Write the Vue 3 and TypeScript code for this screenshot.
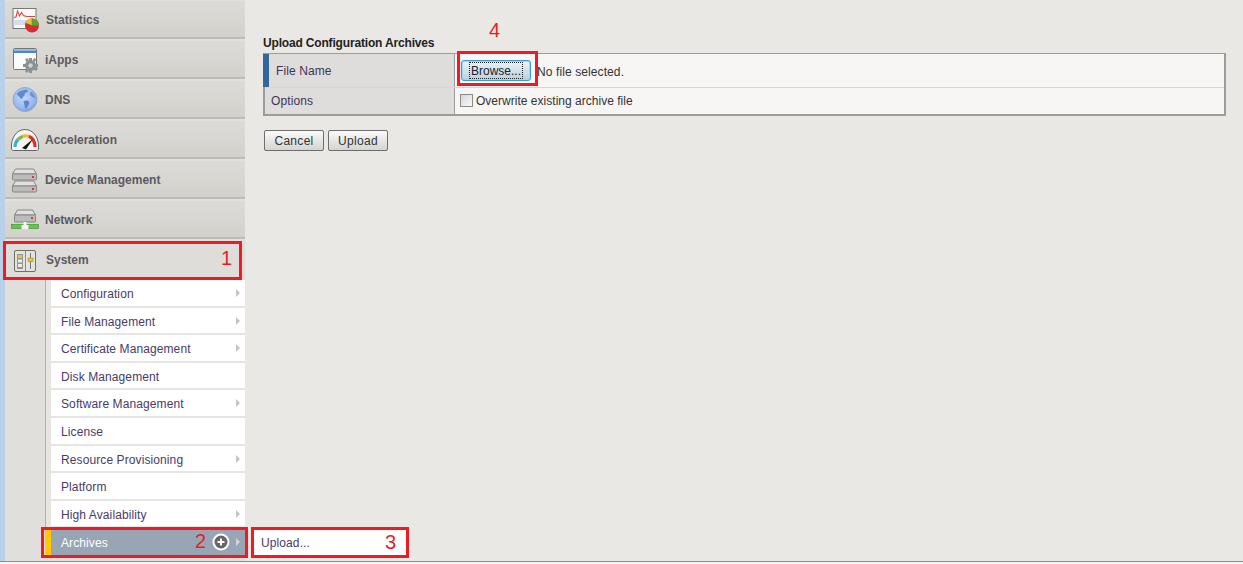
<script setup lang="ts">
const mainItems = [
  { key: 'stats', label: 'Statistics' },
  { key: 'apps', label: 'iApps' },
  { key: 'dns', label: 'DNS' },
  { key: 'accel', label: 'Acceleration' },
  { key: 'device', label: 'Device Management' },
  { key: 'network', label: 'Network' },
]
const subItems = [
  { label: 'Configuration', arrow: true },
  { label: 'File Management', arrow: true },
  { label: 'Certificate Management', arrow: true },
  { label: 'Disk Management', arrow: false },
  { label: 'Software Management', arrow: true },
  { label: 'License', arrow: false },
  { label: 'Resource Provisioning', arrow: true },
  { label: 'Platform', arrow: false },
  { label: 'High Availability', arrow: true },
]
</script>

<template>
  <div class="page">
    <aside class="sidebar">
      <nav class="nav">
        <div v-for="item in mainItems" :key="item.key" class="nav-item">
          <span class="icon">
            <svg v-if="item.key === 'stats'" width="30" height="30" viewBox="0 0 30 30">
              <rect x="3" y="3.500" width="23" height="20" fill="#f8f8f6" stroke="#77777a" />
              <rect x="3.500" y="15" width="22" height="5" fill="#d3deea" />
              <path d="M4 12.500l2-.5 1.500-6 2 5 2-3.500 2 3 3 1H25" fill="none" stroke="#d64a4a" stroke-width="1.100" />
              <circle cx="22" cy="20.500" r="7" fill="#d42b34" />
              <path d="M22 20.500V13.500A7 7 0 0 1 29 20.500z" fill="#5ca62f" />
              <path d="M22 20.500L15.500 18A7 7 0 0 1 22 13.500z" fill="#edc42b" />
              <path d="M22 20.500V13.500M22 20.500H29M22 20.500L15.500 18" stroke="#6b7a3a" stroke-width=".5" />
            </svg>
            <svg v-else-if="item.key === 'apps'" width="30" height="30" viewBox="0 0 30 30">
              <rect x="3.500" y="3.500" width="23" height="21" rx="1" fill="#fbfbfb" stroke="#77777a" />
              <rect x="4" y="4" width="22" height="1.500" fill="#9cc0e6" />
              <rect x="4" y="5.500" width="22" height="2.500" fill="#4c86c8" />
              <g fill="#8b9094">
                <circle cx="20.500" cy="20.500" r="5.500" />
                <path d="M19 13h3v3h-3zM19 25h3v3h-3zM13 19h3v3h-3zM25 19h3v3h-3zM15 15l2-2 2 2-2 2zM24 24l2-2 2 2-2 2zM22.500 15l2-2 2 2-2 2zM15 26l2-2 2 2-2 2z" />
              </g>
              <circle cx="20.500" cy="20.500" r="2.200" fill="#d0d2d4" />
            </svg>
            <svg v-else-if="item.key === 'dns'" width="30" height="30" viewBox="0 0 30 30">
              <defs>
                <radialGradient id="globe" cx="0.450" cy="0.400" r="0.650">
                  <stop offset="0" stop-color="#c6d8f6" />
                  <stop offset="0.700" stop-color="#9ab9ec" />
                  <stop offset="1" stop-color="#6d98de" />
                </radialGradient>
              </defs>
              <circle cx="15" cy="14.500" r="12" fill="url(#globe)" stroke="#93a8ca" />
              <path d="M7 8.500l3-2.500 6-1.500 2 1-1 2-2 .5-.5 2.500-1.500 1.500-1 2-2-1-1-2-2-1z" fill="#5f8ad2" />
              <path d="M13.500 16l4-.5 2 1.500-1 3-2 3.500-1.500 0-.5-3.500z" fill="#5a86d0" />
              <path d="M21 6.500l3 3 1.500 4-2.500-1-1.500-1-2-2z" fill="#6a93d8" />
            </svg>
            <svg v-else-if="item.key === 'accel'" width="30" height="30" viewBox="0 0 30 30">
              <path d="M1.500 24c-1-11 5-19.500 13.500-19.500S29.500 13 28.500 24c0 1-1 1.500-2 1.500h-23c-1 0-2-.5-2-1.500z" fill="#f5f4f0" stroke="#66666a" />
              <path d="M5 22c0-3 1-5.500 3-7.500" fill="none" stroke="#38b6c0" stroke-width="3.200" />
              <path d="M8 14.500c1.500-1.500 3-2.500 5-3.200" fill="none" stroke="#7cbf3c" stroke-width="3.200" />
              <path d="M13 11.300c2-.7 4-.7 6 0" fill="none" stroke="#f2b824" stroke-width="3.200" />
              <path d="M19 11.300c3.500 1.500 6 5.500 6 10.700" fill="none" stroke="#de2e2e" stroke-width="3.200" />
              <path d="M12 23l11-9-7 10.500z" fill="#141414" />
            </svg>
            <svg v-else-if="item.key === 'device'" width="30" height="30" viewBox="0 0 30 30">
              <g v-for="y in [3.500, 15.500]" :key="y" :transform="`translate(0 ${y})`">
                <path d="M2.500 5.500l3-5h18l3 5z" fill="#e0e0de" stroke="#85858a" />
                <rect x="2.500" y="5.500" width="24" height="6" rx="1" fill="#bcbcba" stroke="#85858a" />
                <rect x="22" y="7.500" width="2" height="2" fill="#e0303a" />
              </g>
            </svg>
            <svg v-else width="30" height="30" viewBox="0 0 30 30">
              <path d="M4.500 10l3-5h15l3 5z" fill="#e0e0de" stroke="#85858a" />
              <rect x="4.500" y="10" width="21" height="7" rx="1" fill="#bcbcba" stroke="#85858a" />
              <rect x="21" y="12" width="2" height="2" fill="#e0303a" />
              <rect x="1.500" y="19.500" width="27" height="4" fill="#5ccc42" stroke="#3c8c2a" stroke-width=".6" />
              <path d="M11.500 24v-4h2v-3h3v3h2v4z" fill="#f4f4f4" />
            </svg>
          </span>
          <span class="nav-label" :class="{ 'nav-label-wide': item.key === 'stats' }">{{ item.label }}</span>
        </div>
        <div class="nav-item nav-item-active">
          <span class="icon">
            <svg width="30" height="30" viewBox="0 0 30 30">
              <rect x="4.500" y="5.500" width="21" height="21" rx="1.500" fill="#e4e3dd" stroke="#6e6e6c" />
              <path d="M15.500 6v20" stroke="#8e8e8a" />
              <rect x="7" y="9" width="6" height="15" fill="#96968f" />
              <rect x="8" y="10" width="4" height="3" fill="#e8c830" />
              <rect x="8" y="14.500" width="4" height="3" fill="#ecece8" />
              <rect x="8" y="19" width="4" height="3" fill="#ecece8" />
              <path d="M20.500 8v16" stroke="#77777a" />
              <rect x="18" y="13" width="5" height="3.500" fill="#e8c830" stroke="#8a7a30" stroke-width=".5" />
            </svg>
          </span>
          <span class="nav-label nav-label-wide">System</span>
        </div>
      </nav>

      <div class="sub-wrap">
        <ul class="submenu">
          <li v-for="sub in subItems" :key="sub.label" class="sub-item">
            <span>{{ sub.label }}</span>
            <i v-if="sub.arrow" class="arrow"></i>
          </li>
          <li class="sub-item sub-current">
            <span>Archives</span>
            <span class="plus">
              <svg width="18" height="18" viewBox="0 0 18 18">
                <circle cx="9" cy="9" r="7.500" fill="#666" stroke="#fff" stroke-width="2" />
                <path d="M5.500 9h7M9 5.500v7" stroke="#fff" stroke-width="2" />
              </svg>
            </span>
            <i class="arrow arrow-current"></i>
          </li>
        </ul>
      </div>
      <div class="flyout">Upload...</div>
    </aside>

    <main class="main">
      <h2 class="title">Upload Configuration Archives</h2>
      <div class="form-table">
        <div class="row row-first">
          <div class="head head-required">File Name</div>
          <div class="cell cell-file">
            <button class="btn btn-focus" type="button"><span class="dots">Browse...</span></button>
            <span class="file-note">No file selected.</span>
          </div>
        </div>
        <div class="row">
          <div class="head">Options</div>
          <div class="cell cell-option">
            <span class="checkbox"></span>
            <span>Overwrite existing archive file</span>
          </div>
        </div>
      </div>
      <div class="actions">
        <button class="btn" type="button">Cancel</button>
        <button class="btn" type="button">Upload</button>
      </div>
    </main>

    <div class="mark mark-1"><b>1</b></div>
    <div class="mark mark-2"><b>2</b></div>
    <div class="mark mark-3"><b>3</b></div>
    <div class="mark mark-4"></div>
    <span class="mark-num">4</span>
    <div class="bottom-line"></div>
  </div>
</template>

<style>
html, body { margin: 0; background: #e9e8e4; }
</style>

<style scoped>
* { box-sizing: border-box; }
.page {
  position: relative;
  display: flex;
  width: 1243px;
  height: 564px;
  overflow: hidden;
  background: #e9e8e4;
  font-family: "Liberation Sans", Arial, sans-serif;
  font-size: 12px;
  color: #333;
}
.sidebar {
  position: relative;
  flex: 0 0 245px;
  height: 100%;
  border-left: 5px solid #b9d0ea;
  background: #e0dfdb;
}
.nav { margin-top: -1px; }
.nav-item {
  display: flex;
  align-items: center;
  height: 40px;
  padding: 1px 0 0 5px;
  background: linear-gradient(#dcdbd7, #d2d1cc);
  border-bottom: 2px solid #bdbcb8;
  border-top: 2px solid #e2e1dd;
}
.nav-item-active {
  height: 41px;
  padding: 0 0 2px 5px;
  background: #deddd9;
  border-bottom: 0;
}
.icon { display: flex; flex: 0 0 30px; height: 30px; }
.nav-label {
  margin-left: 5px;
  font-weight: bold;
  color: #5a5a60;
  white-space: nowrap;
}
.nav-label-wide { margin-left: 6px; }
.sub-wrap {
  margin-left: 40px;
  padding-left: 5px;
  border-left: 1px solid #b5b4b0;
  background: #e6e5e1;
}
.submenu {
  margin: 0;
  padding: 0;
  list-style: none;
}
.sub-item {
  position: relative;
  display: flex;
  align-items: center;
  height: 27.600px;
  padding: 2.400px 0 0 10px;
  background: #fff;
  border-bottom: 2px solid #e6e5e2;
  color: #4a3a6a;
  letter-spacing: 0.1px;
}
.arrow {
  position: absolute;
  right: 5px;
  top: 9px;
  width: 0;
  height: 0;
  border-left: 4px solid #c4c4c4;
  border-top: 4px solid transparent;
  border-bottom: 4px solid transparent;
}
.sub-current {
  margin-left: -6px;
  padding: 1px 0 0 10px;
  height: 28px;
  background: #98a5b4;
  border-bottom: 0;
  border-left: 6px solid #ffc800;
  color: #fff;
}
.arrow-current { border-left-color: #d0d5da; top: 10px; }
.plus {
  position: absolute;
  right: 15px;
  top: 5px;
  display: flex;
}
.flyout {
  position: absolute;
  left: 247px;
  top: 528px;
  width: 156px;
  height: 28px;
  padding: 8px 0 0 9px;
  background: #fff;
  color: #4a3a6a;
  letter-spacing: 0.1px;
}
.main {
  flex: 1;
  padding: 37px 17px 0 18px;
}
.title {
  margin: 0 0 3px;
  font-size: 12px;
  line-height: 13px;
  font-weight: bold;
  color: #222;
  letter-spacing: -0.17px;
}
.form-table {
  width: 963px;
  border: 2px solid #9c9c9c;
  border-width: 1px 2px 2px 2px;
}
.row {
  display: grid;
  grid-template-columns: 190px 1fr;
  height: 26px;
}
.row-first { height: 34px; border-bottom: 1px solid #d7d6d2; }
.head {
  display: flex;
  align-items: center;
  padding-left: 6px;
  background: #dedddb;
  border-right: 1px solid #9c9c9c;
  color: #3e3458;
  letter-spacing: 0.1px;
}
.head-required {
  margin-left: -2px;
  padding-left: 7px;
  border-left: 6px solid #336699;
}
.cell {
  display: flex;
  align-items: center;
  background: #f7f6f4;
  letter-spacing: 0.02px;
}
.cell-file { padding-left: 6px; }
.cell-option { padding-left: 5px; }
.btn {
  min-width: 60px;
  height: 21px;
  padding: 0 9px;
  border: 1px solid #6e6e6e;
  border-radius: 2px;
  background: linear-gradient(#fafafa, #d4d4d2);
  font: 12px "Liberation Sans", Arial, sans-serif;
  letter-spacing: 0.3px;
  color: #333;
}
.btn-focus {
  width: 70px;
  padding: 1px 7px 2px;
  border: 1px solid #3d9bd0;
  border-radius: 3px;
  background: linear-gradient(#eaf3f8, #bcd0dc);
  box-shadow: inset 0 0 0 1px #a8d4ec;
  letter-spacing: 0;
  color: #222;
}
.dots {
  display: block;
  height: 17px;
  padding-top: 2px;
  line-height: 13px;
  border: 1px dotted #222;
}
.file-note { margin: 2px 0 0 6px; color: #333; letter-spacing: 0.1px; }
.checkbox {
  width: 13px;
  height: 13px;
  margin-right: 3px;
  margin-top: -2px;
  border: 1px solid #8a8a8a;
  background: linear-gradient(135deg, #d8d8d8, #f8f8f8);
}
.actions {
  display: flex;
  gap: 4px;
  margin-top: 14px;
  margin-left: 1px;
}
.mark {
  position: absolute;
  border: 3px solid #ed1c24;
  color: #ed1c24;
}
.mark b {
  position: absolute;
  font: 20px "Liberation Sans", Arial, sans-serif;
}
.mark-1 { left: 3px; top: 241px; width: 239px; height: 39px; }
.mark-1 b { right: 7px; top: 3px; }
.mark-2 { left: 41px; top: 527px; width: 207px; height: 31px; }
.mark-2 b { right: 39px; top: 0; }
.mark-3 { left: 251px; top: 527px; width: 158px; height: 31px; }
.mark-3 b { right: 10px; top: 1px; }
.mark-4 { left: 457px; top: 51px; width: 81px; height: 35px; }
.mark-num {
  position: absolute;
  left: 489px;
  top: 19px;
  font-size: 20px;
  color: #ed1c24;
}
.bottom-line {
  position: absolute;
  left: 0;
  right: 0;
  top: 561px;
  height: 3px;
  border-top: 1px solid #8f8f8f;
  background: #f4f4f2;
}
</style>
